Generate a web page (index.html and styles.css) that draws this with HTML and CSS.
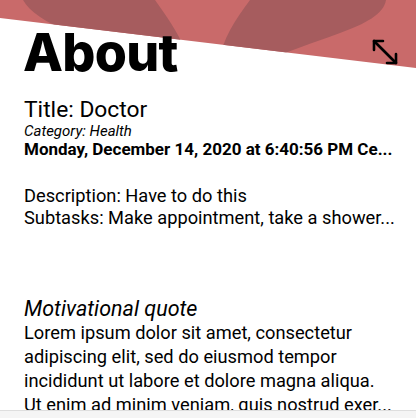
FILE: index.html
```html
<!DOCTYPE html>
<html>
<head>
<meta charset="utf-8">
<link rel="stylesheet" href="styles.css">
</head>
<body>
<div class="page">
  <main class="main">
    <svg class="banner" viewBox="0 0 416 70" width="416" height="70" aria-hidden="true">
      <defs>
        <clipPath id="band">
          <path d="M0 0 H416 V68 L0 18 Z"/>
        </clipPath>
      </defs>
      <path d="M0 0 H416 V68 L0 18 Z" fill="#c96a6a"/>
      <g clip-path="url(#band)" fill="#a65c5e">
        <path d="M23 0 C30 12 45 22 70 32 L185 50 C178 32 165 14 155 0 Z"/>
        <path d="M250 0 L386 0 C384 14 365 24 340 33 C310 44 290 50 270 60 L220 60 C222 40 235 20 250 0 Z"/>
      </g>
    </svg>
    <button class="expand" aria-label="Expand">
      <svg viewBox="0 0 28 28" width="28" height="28">
        <g fill="none" stroke="#000" stroke-width="2.6" stroke-linecap="round" stroke-linejoin="round">
          <path d="M3 3 L25 25"/>
          <path d="M3 12 V3 H12"/>
          <path d="M25 16 V25 H16"/>
        </g>
      </svg>
    </button>
    <div class="content">
      <h1 class="heading">About</h1>
      <p class="title">Title: Doctor</p>
      <p class="category">Category: Health</p>
      <p class="date">Monday, December 14, 2020 at 6:40:56 PM Ce...</p>
      <div class="details">
        <p class="line">Description: Have to do this</p>
        <p class="line">Subtasks: Make appointment, take a shower...</p>
      </div>
      <div class="quote">
        <p class="quote-label">Motivational quote</p>
        <p class="quote-text">
          <span class="ql">Lorem ipsum dolor sit amet, consectetur</span>
          <span class="ql">adipiscing elit, sed do eiusmod tempor</span>
          <span class="ql">incididunt ut labore et dolore magna aliqua.</span>
          <span class="ql">Ut enim ad minim veniam, quis nostrud exer...</span>
        </p>
      </div>
    </div>
  </main>
  <div class="bottom-bar"></div>
</div>
</body>
</html>
```
FILE: styles.css
```css
* { box-sizing: border-box; }
html, body {
  margin: 0;
  padding: 0;
  background: #fff;
}
body {
  font-family: Roboto, "Liberation Sans", sans-serif;
  color: #000;
}
.page {
  width: 416px;
  height: 418px;
  display: flex;
  flex-direction: column;
  overflow: hidden;
}
.main {
  flex: 1;
  position: relative;
  overflow: hidden;
}
.banner {
  position: absolute;
  left: 0;
  top: 0;
  display: block;
}
.expand {
  position: absolute;
  left: 371px;
  top: 38px;
  width: 28px;
  height: 28px;
  padding: 0;
  border: 0;
  background: none;
}
.expand svg { display: block; }
.content {
  position: relative;
  padding: 27px 12px 0 24px;
  display: flex;
  flex-direction: column;
}
p { margin: 0; }
.heading {
  margin: 0 0 0 -1px;
  font-family: Inter, Roboto, sans-serif;
  font-size: 52px;
  line-height: 52px;
  font-weight: 800;
  letter-spacing: -0.7px;
}
.title {
  margin-top: 18px;
  font-size: 22.8px;
  line-height: 26px;
}
.category {
  font-size: 15px;
  line-height: 17px;
  font-style: italic;
}
.date {
  font-size: 17px;
  line-height: 18px;
  font-weight: 700;
  letter-spacing: 0;
  white-space: nowrap;
}
.details {
  margin-top: 27px;
}
.line {
  font-size: 18.25px;
  line-height: 22px;
  white-space: nowrap;
}
.quote {
  margin-top: 68px;
}
.quote-label {
  font-size: 21.5px;
  line-height: 24px;
  font-style: italic;
}
.quote-text {
  font-size: 18.25px;
  line-height: 24px;
}
.ql {
  display: block;
  white-space: nowrap;
}
.bottom-bar {
  flex: 0 0 8px;
  background: #f5f5f5;
  border-top: 1px solid #dedede;
}
```
